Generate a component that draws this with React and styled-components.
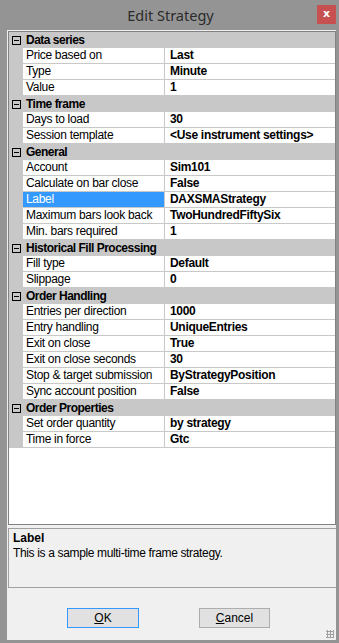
import styled, { createGlobalStyle } from 'styled-components';

const GlobalStyle = createGlobalStyle`
  html, body {
    margin: 0;
    padding: 0;
    background: #949494;
  }
  * {
    box-sizing: border-box;
  }
`;

const sections = [
  {
    title: 'Data series',
    rows: [
      ['Price based on', 'Last'],
      ['Type', 'Minute'],
      ['Value', '1'],
    ],
  },
  {
    title: 'Time frame',
    rows: [
      ['Days to load', '30'],
      ['Session template', '<Use instrument settings>'],
    ],
  },
  {
    title: 'General',
    rows: [
      ['Account', 'Sim101'],
      ['Calculate on bar close', 'False'],
      ['Label', 'DAXSMAStrategy', true],
      ['Maximum bars look back', 'TwoHundredFiftySix'],
      ['Min. bars required', '1'],
    ],
  },
  {
    title: 'Historical Fill Processing',
    rows: [
      ['Fill type', 'Default'],
      ['Slippage', '0'],
    ],
  },
  {
    title: 'Order Handling',
    rows: [
      ['Entries per direction', '1000'],
      ['Entry handling', 'UniqueEntries'],
      ['Exit on close', 'True'],
      ['Exit on close seconds', '30'],
      ['Stop & target submission', 'ByStrategyPosition'],
      ['Sync account position', 'False'],
    ],
  },
  {
    title: 'Order Properties',
    rows: [
      ['Set order quantity', 'by strategy'],
      ['Time in force', 'Gtc'],
    ],
  },
];

const App = () => (
  <>
    <GlobalStyle />
    <Window>
      <TitleBar>
        <span />
        <Title>Edit Strategy</Title>
        <CloseButton>x</CloseButton>
      </TitleBar>
      <Body>
        <Grid>
          {sections.map((s) => (
            <div key={s.title}>
              <CategoryRow>
                <Toggle />
                <CategoryText>{s.title}</CategoryText>
              </CategoryRow>
              {s.rows.map(([name, value, selected]) => (
                <PropRow key={name}>
                  <Margin />
                  <NameCell $selected={selected}>{name}</NameCell>
                  <ValueCell>{value}</ValueCell>
                </PropRow>
              ))}
            </div>
          ))}
        </Grid>
        <Description>
          <DescTitle>Label</DescTitle>
          <DescText>This is a sample multi-time frame strategy.</DescText>
        </Description>
        <ButtonBar>
          <DialogButton $default>
            <u>O</u>K
          </DialogButton>
          <DialogButton>
            <u>C</u>ancel
          </DialogButton>
          <Grip />
        </ButtonBar>
      </Body>
    </Window>
  </>
);

const Window = styled.div`
  width: 339px;
  height: 643px;
  display: flex;
  flex-direction: column;
  padding: 0 3px 3px 7px;
  background: #949494;
  font-family: 'Liberation Sans', Arial, sans-serif;
`;

const TitleBar = styled.div`
  height: 30px;
  display: grid;
  grid-template-columns: 1fr auto 1fr;
  align-items: center;
`;

const Title = styled.div`
  font-family: 'Noto Sans', 'Open Sans', sans-serif;
  font-size: 14.5px;
  color: #2b2b2b;
  margin-top: -1px;
  margin-left: -2px;
`;

const CloseButton = styled.div`
  justify-self: end;
  width: 19px;
  height: 19px;
  margin-top: -1px;
  background: #c75050;
  color: #fff;
  font-family: 'DejaVu Sans', sans-serif;
  font-weight: bold;
  font-size: 11px;
  line-height: 17px;
  text-align: center;
`;

const Body = styled.div`
  flex: 1;
  display: flex;
  flex-direction: column;
  background: #f0f0f0;
  padding: 1px 0 0 1px;
  position: relative;
`;

const Grid = styled.div`
  height: 494px;
  border: 1px solid #828282;
  background: #fff;
`;

const CategoryRow = styled.div`
  height: 16px;
  display: flex;
  align-items: center;
  background: #c8c8c8;
  padding-left: 3px;
`;

const Toggle = styled.div`
  width: 9px;
  height: 9px;
  border: 1px solid #000;
  position: relative;
  margin-right: 5px;
  &::after {
    content: '';
    position: absolute;
    left: 1px;
    top: 3px;
    width: 5px;
    height: 1px;
    background: #000;
  }
`;

const CategoryText = styled.span`
  font-size: 12px;
  font-weight: bold;
  color: #000;
  letter-spacing: -0.5px;
`;

const PropRow = styled.div`
  height: 16px;
  display: grid;
  grid-template-columns: 14px 142px 1fr;
`;

const Margin = styled.div`
  background: #c8c8c8;
`;

const NameCell = styled.div`
  font-size: 12px;
  line-height: 15px;
  letter-spacing: -0.3px;
  padding-left: 3px;
  white-space: nowrap;
  overflow: hidden;
  color: ${(p) => (p.$selected ? '#fff' : '#000')};
  background: ${(p) => (p.$selected ? '#3399ff' : '#fff')};
  border-right: 1px solid #c8c8c8;
  border-bottom: 1px solid #c8c8c8;
`;

const ValueCell = styled.div`
  font-size: 12px;
  font-weight: bold;
  line-height: 15px;
  padding-left: 5px;
  white-space: nowrap;
  color: #000;
  letter-spacing: -0.3px;
  border-bottom: 1px solid #c8c8c8;
`;

const Description = styled.div`
  margin-top: 3px;
  height: 60px;
  border-top: 1px solid #a0a0a0;
  border-bottom: 1px solid #a0a0a0;
  border-left: 1px solid #a0a0a0;
  padding: 2px 0 0 4px;
  background: #f0f0f0;
`;

const DescTitle = styled.div`
  font-size: 12px;
  font-weight: bold;
  line-height: 15px;
  color: #000;
`;

const DescText = styled.div`
  font-size: 12px;
  line-height: 15px;
  letter-spacing: -0.35px;
  color: #000;
`;

const ButtonBar = styled.div`
  flex: 1;
  display: flex;
  justify-content: center;
  align-items: flex-start;
  gap: 60px;
  padding-top: 20px;
  margin-right: 7px;
`;

const DialogButton = styled.div`
  width: ${(p) => (p.$default ? '72px' : '71px')};
  height: 20px;
  display: flex;
  align-items: center;
  justify-content: center;
  font-size: 12px;
  color: #000;
  background: #e1e1e1;
  border: 1px solid ${(p) => (p.$default ? '#3399ff' : '#adadad')};
  u {
    text-decoration: underline;
  }
`;

const Grip = styled.div`
  position: absolute;
  right: 2px;
  bottom: 2px;
  width: 8px;
  height: 8px;
  background-image: radial-gradient(circle, #a0a0a0 1px, transparent 1.2px);
  background-size: 3px 3px;
`;

export default App;
